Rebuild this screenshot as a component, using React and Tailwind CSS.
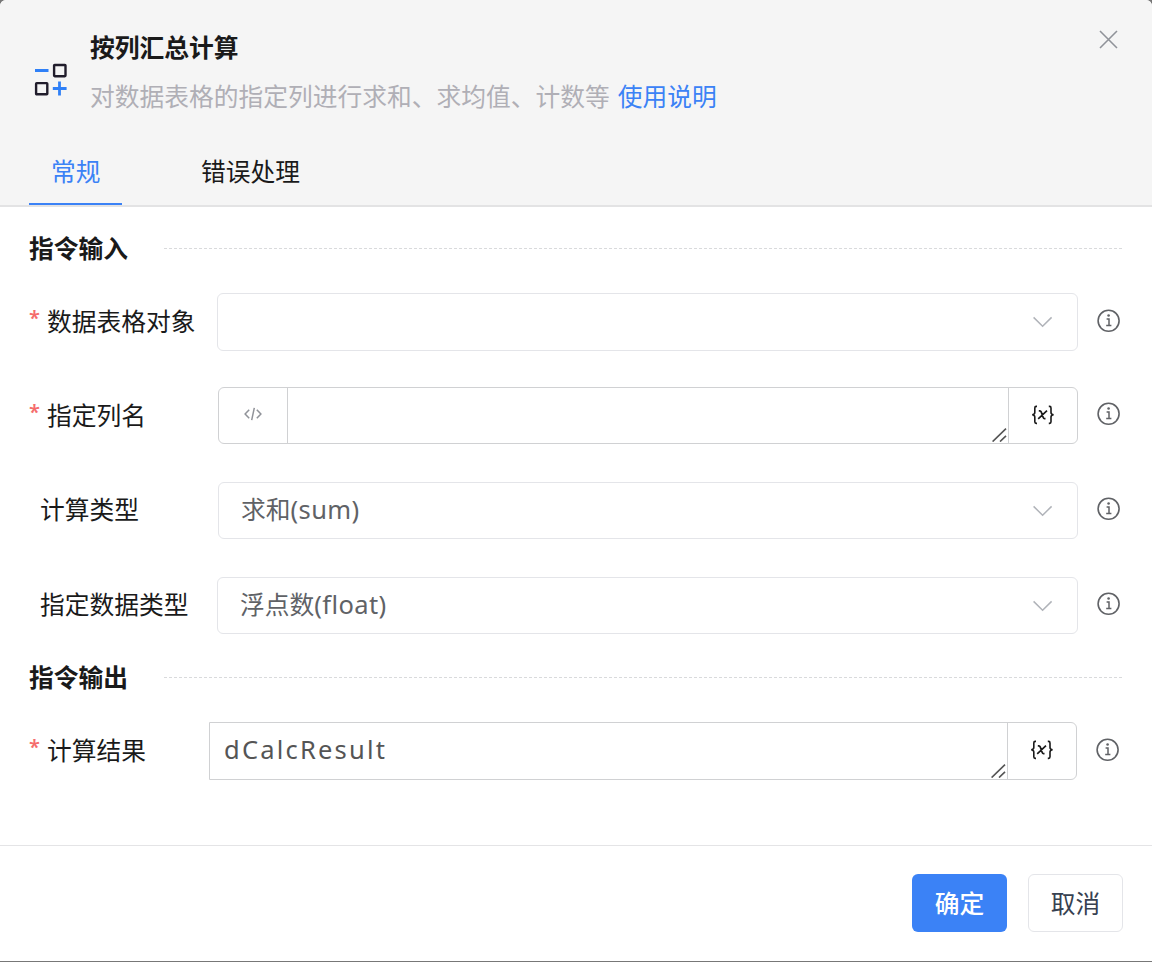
import React from "react";

function InfoIcon() {
  return (
    <svg className="h-6 w-6 shrink-0" viewBox="0 0 24 24" fill="none" stroke="#606266" strokeWidth="1.6">
      <circle cx="11.6" cy="11.8" r="10.5" />
      <path d="M9.6 10H12v6.3M9.2 16.5h5.2" strokeWidth="1.5" />
      <circle cx="11.6" cy="6.5" r="1.3" fill="#606266" stroke="none" />
    </svg>
  );
}

function Chevron() {
  return (
    <svg className="mr-[24.5px] h-3 w-5" viewBox="0 0 20 12" fill="none" stroke="#b0b3b9" strokeWidth="1.5">
      <path d="M0.6 1.4 9.6 10.2 18.6 1.4" />
    </svg>
  );
}

function ResizeGrip() {
  return (
    <svg className="h-[14px] w-[15px]" viewBox="0 0 15 14" fill="none" stroke="#555" strokeWidth="1.6">
      <path d="M0.6 13.6 14 0.6M8 13.6l6-5.8" />
    </svg>
  );
}

function VariableButton() {
  return (
    <div className="flex w-[69px] items-center justify-center border-l border-[#d0d1d3]">
      <svg className="mb-[2px] mr-px h-5 w-6" viewBox="0 0 24 20" fill="none" stroke="#1a1a1a" strokeWidth="1.6">
        <path d="M6 1.4H5.2Q3.8 1.4 3.8 3v4.6Q3.8 9.6 1.2 9.8q2.6.2 2.6 2.2v4.8q0 1.6 1.4 1.6H6M17.8 1.4h.8q1.4 0 1.4 1.6v4.6q0 2 2.6 2.2-2.6.2-2.6 2.2v4.8q0 1.6-1.4 1.6h-.8" />
        <path d="M7.8 5.9h1.1q.9 0 1.3 1l2 5.6q.4 1.1 1.3 1.1h1M16 5.7 7.2 13.8" strokeWidth="1.7" />
      </svg>
    </div>
  );
}

function Label({ children, required, className }) {
  return (
    <div className={"flex shrink-0 leading-[36px] text-[#1a1a1a] " + className}>
      {required && <span className="w-[18px] text-[20px] font-semibold leading-[27px] text-[#f56c6c]">*</span>}
      <span>{children}</span>
    </div>
  );
}

function SectionTitle({ children }) {
  return (
    <div className="flex h-9 items-center pl-[29px] pr-[29px]">
      <h2 className="w-[135px] pt-[2px] font-bold leading-[36px] text-[#1a1a1a]">{children}</h2>
      <div className="h-px flex-1 bg-[repeating-linear-gradient(90deg,#d9dadc_0px,#d9dadc_3px,transparent_3px,transparent_5px)]" />
    </div>
  );
}

function Select({ children, latin, className }) {
  return (
    <div className={"flex items-center justify-between rounded-[6px] border border-[#e4e5e9] bg-white text-[#606266] " + className}>
      <span className="pb-[2px] pl-[22px] leading-[36px]">
        {children}
        <span className="text-[25.5px] tracking-[0.4px]">{latin}</span>
      </span>
      <Chevron />
    </div>
  );
}

export default function App() {
  return (
    <div className="h-[962px] w-[1152px] overflow-hidden bg-[#777] pb-px font-['Noto_Sans','Noto_Sans_CJK_SC',sans-serif] text-[24.75px]">
      <div className="flex h-[961px] flex-col overflow-hidden rounded-t-[6px] bg-white">
        <header className="flex h-[207px] shrink-0 flex-col border-b-2 border-[#e3e3e4] bg-[#f5f5f5]">
          <div className="flex h-[136px] pl-[34px] pr-[34px]">
            <svg className="mt-[63px] h-[34px] w-[34px]" viewBox="0 0 34 34" fill="none">
              <path d="M1 7.5h13.5M18.8 25.5h13.8M25.5 18.6v13.8" stroke="#2f80f7" strokeWidth="2.8" />
              <rect x="20.1" y="2" width="11.4" height="11.2" rx=".6" stroke="#211d2c" strokeWidth="2.4" />
              <rect x="2.1" y="20.1" width="11.2" height="11.2" rx=".6" stroke="#211d2c" strokeWidth="2.4" />
            </svg>
            <div className="flex-1 pl-[22px] pt-[30px]">
              <h1 className="font-bold leading-[36px] text-[#1a1a1a]">按列汇总计算</h1>
              <p className="mt-[13px] leading-[36px] text-[#b0afb6]">
                对数据表格的指定列进行求和、求均值、计数等<span className="ml-2 text-[#3b82f6]">使用说明</span>
              </p>
            </div>
            <svg className="mt-[30px] h-5 w-5" viewBox="0 0 20 20" fill="none" stroke="#909399" strokeWidth="1.6">
              <path d="m2 1 17 17M19 1l-17 17" />
            </svg>
          </div>
          <nav className="flex flex-1 pl-[29px] leading-[36px]">
            <div className="w-[93px] border-b-2 border-[#3b82f6] pl-[22px] pt-[18px] text-[#3b82f6]">常规</div>
            <div className="pl-[79px] pt-[18px] text-[#1a1a1a]">错误处理</div>
          </nav>
        </header>

        <main className="h-[638px] shrink-0 pt-[23px]">
          <SectionTitle>指令输入</SectionTitle>
          <div className="mt-[27px] flex h-[58px] items-center">
            <Label required className="w-[217px] pl-[29px]">数据表格对象</Label>
            <Select className="h-[58px] w-[861px]" />
            <div className="pb-[3px] pl-[18.5px]"><InfoIcon /></div>
          </div>
          <div className="mt-[36px] flex h-[57px] items-center">
            <Label required className="w-[218px] pl-[29px]">指定列名</Label>
            <div className="flex h-[57px] w-[860px] rounded-[6px] border border-[#d0d1d3]">
              <div className="flex w-[69px] items-center justify-center border-r border-[#d0d1d3]">
                <svg className="mb-[3px] mr-px h-[14px] w-[18px]" viewBox="0 0 18 14" fill="none" stroke="#909399" strokeWidth="1.5">
                  <path d="M5.2 2.8 1.1 7l4.1 4.2M12.8 2.8 16.9 7l-4.1 4.2M10.3.8 7.7 13.2" />
                </svg>
              </div>
              <div className="flex flex-1 items-end justify-end pb-px pr-px"><ResizeGrip /></div>
              <VariableButton />
            </div>
            <div className="pb-1 pl-[18.5px]"><InfoIcon /></div>
          </div>
          <div className="mt-[38px] flex h-[57px] items-center">
            <Label className="w-[218px] pb-[2px] pl-[40px]">计算类型</Label>
            <Select className="h-[57px] w-[860px]" latin="(sum)">求和</Select>
            <div className="pb-1 pl-[18.5px]"><InfoIcon /></div>
          </div>
          <div className="mt-[38px] flex h-[57px] items-center">
            <Label className="w-[217px] pb-[2px] pl-[40px]">指定数据类型</Label>
            <Select className="h-[57px] w-[861px]" latin="(float)">浮点数</Select>
            <div className="pb-1 pl-[18.5px]"><InfoIcon /></div>
          </div>
          <div className="mt-[25px]">
            <SectionTitle>指令输出</SectionTitle>
          </div>
          <div className="mt-[27px] flex h-[58px] items-center">
            <Label required className="w-[209px] pl-[29px]">计算结果</Label>
            <div className="flex h-[58px] w-[868px] rounded-r-[6px] border border-[#d0d1d3]">
              <div className="flex flex-1 justify-between pl-[14px] pr-px">
                <span className="pt-[8px] text-[25.5px] leading-[36px] tracking-[2.2px] text-[#555]">dCalcResult</span>
                <div className="flex items-end pb-px"><ResizeGrip /></div>
              </div>
              <VariableButton />
            </div>
            <div className="pb-[3px] pl-[18.5px]"><InfoIcon /></div>
          </div>
        </main>

        <footer className="flex flex-1 justify-end gap-[21px] border-t border-[#e4e4e6] pr-[29px] pt-[28px]">
          <button className="h-[58px] w-[95px] rounded-[6px] bg-[#3b82f6] pt-[2px] font-medium text-white">确定</button>
          <button className="h-[58px] w-[95px] rounded-[6px] border border-[#e4e5e9] bg-white pt-[2px] text-[#374151]">取消</button>
        </footer>
      </div>
    </div>
  );
}
